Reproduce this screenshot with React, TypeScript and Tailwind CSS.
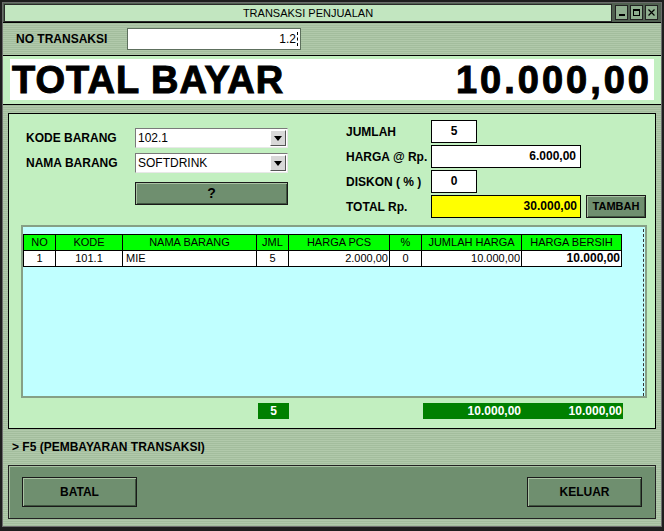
import React from "react";

const font = { fontFamily: '"Liberation Sans", Arial, sans-serif' };

const rows = [
  { no: "1", kode: "101.1", nama: "MIE", jml: "5", harga: "2.000,00", disk: "0", jumlah: "10.000,00", bersih: "10.000,00" },
];

const heads = ["NO", "KODE", "NAMA BARANG", "JML", "HARGA PCS", "%", "JUMLAH HARGA", "HARGA BERSIH"];

const Combo = ({ value }: { value: string }) => (
  <div className="flex h-[20px] w-[153px] border border-t-[#7a7a7a] border-l-[#7a7a7a] border-b-[#e8e8e8] border-r-[#e8e8e8] bg-white">
    <div className="flex-1 pl-[2px] text-[12px] leading-[18px] text-black">{value}</div>
    <div className="m-[1px] flex w-[16px] items-center justify-center border border-t-white border-l-white border-b-[#555] border-r-[#555] bg-[#d8d8d8]">
      <svg width="8" height="5" viewBox="0 0 8 5">
        <path d="M0 0h8L4 5z" fill="#000" />
      </svg>
    </div>
  </div>
);

const GreenButton = ({ children, className }: { children: React.ReactNode; className: string }) => (
  <div className={`flex items-center justify-center border border-[#1a1a1a] bg-[#6f8f6f] font-bold text-black shadow-[inset_1px_1px_0_#a9c2a3,inset_-1px_-1px_0_#3f553f] ${className}`}>
    {children}
  </div>
);

const Field = ({ value, className }: { value: string; className: string }) => (
  <div className={`h-[23px] border border-black text-[12px] font-bold leading-[21px] text-black ${className}`}>{value}</div>
);

const TitleBtn = ({ children }: { children: React.ReactNode }) => (
  <div className="flex h-[15px] w-[13px] items-center justify-center border border-[#222] bg-[#8fae8f]">{children}</div>
);

const stripes =
  "bg-[repeating-linear-gradient(0deg,#a3bd9d_0px,#a3bd9d_1px,#b1c9ab_1px,#b1c9ab_2px)]";

export default function App() {
  return (
    <div style={font} className="h-[531px] w-[664px] overflow-hidden bg-[#1e1e1e] p-[2px]">
      <div className={`flex h-[525px] flex-col border border-[#6c6c6c] ${stripes}`}>
        {/* title bar */}
        <div className="flex h-[19px] items-stretch bg-[#506050]">
          <div className="ml-[1px] mt-[1px] flex flex-1 items-center justify-center border border-[#2a2a2a] bg-[#c2e6c0] text-[11px] text-black">
            TRANSAKSI PENJUALAN
          </div>
          <div className="flex items-center gap-[2px] px-[3px]">
            <TitleBtn>
              <div className="mt-[5px] h-[2px] w-[6px] bg-black" />
            </TitleBtn>
            <TitleBtn>
              <div className="h-[7px] w-[7px] border border-black border-t-2" />
            </TitleBtn>
            <TitleBtn>
              <svg width="7" height="7" viewBox="0 0 7 7">
                <path d="M0.5 0.5l6 6M6.5 0.5l-6 6" stroke="#000" strokeWidth="1.2" />
              </svg>
            </TitleBtn>
          </div>
        </div>
        <div className="h-px bg-black" />

        {/* no transaksi */}
        <div className="flex h-[32px] items-center">
          <div className="ml-[13px] w-[111px] text-[12px] font-bold text-black">NO TRANSAKSI</div>
          <div className="flex h-[22px] w-[174px] items-center justify-end border border-[#5d6f5d] bg-white pr-[2px] text-[12px] text-black">
            1.2<span className="ml-px h-[14px] border-l border-dashed border-black" />
          </div>
        </div>
        <div className="h-px bg-black" />

        {/* total bayar */}
        <div className="h-[48px] bg-[#c2efc0] px-[7px] pt-[3px]">
          <div className="flex h-[41px] items-center justify-between bg-white pl-[2px] pr-[2px] text-[38px] font-bold leading-none text-black [-webkit-text-stroke:1px_black]">
            <span className="tracking-[1px]">TOTAL BAYAR</span>
            <span className="tracking-[3px]">10.000,00</span>
          </div>
        </div>
        <div className="h-px bg-black" />

        {/* main panel */}
        <div className="ml-[5px] mt-[8px] h-[316px] w-[648px] border border-black bg-[#c2efc0] pt-[6px]">
          <div className="flex h-[105px]">
            <div className="ml-[17px] mt-[8px] flex w-[303px] flex-col">
              <div className="flex items-center">
                <div className="w-[109px] text-[12px] font-bold text-black">KODE BARANG</div>
                <Combo value="102.1" />
              </div>
              <div className="mt-[5px] flex items-center">
                <div className="w-[109px] text-[12px] font-bold text-black">NAMA BARANG</div>
                <Combo value="SOFTDRINK" />
              </div>
              <GreenButton className="ml-[109px] mt-[9px] h-[23px] w-[153px] text-[14px]">?</GreenButton>
            </div>
            <div className="ml-[17px] flex flex-col gap-[2px]">
              <div className="flex items-center">
                <div className="w-[85px] text-[12px] font-bold text-black">JUMLAH</div>
                <Field value="5" className="w-[46px] bg-white text-center" />
              </div>
              <div className="flex items-center">
                <div className="w-[85px] text-[12px] font-bold text-black">HARGA @ Rp.</div>
                <Field value="6.000,00" className="w-[150px] bg-white pr-[4px] text-right" />
              </div>
              <div className="flex items-center">
                <div className="w-[85px] text-[12px] font-bold text-black">DISKON ( % )</div>
                <Field value="0" className="w-[46px] bg-white text-center" />
              </div>
              <div className="flex items-center">
                <div className="w-[85px] text-[12px] font-bold text-black">TOTAL Rp.</div>
                <Field value="30.000,00" className="w-[150px] bg-[#ffff00] pr-[3px] text-right" />
                <GreenButton className="ml-[5px] h-[23px] w-[60px] text-[11px]">TAMBAH</GreenButton>
              </div>
            </div>
          </div>

          {/* table */}
          <div className="ml-[12px] flex h-[173px] w-[626px] border-2 border-[#86a086] bg-[#c0ffff] pt-[2px]">
            <div className="flex-1">
              <div className="inline-grid grid-cols-[31px_66px_133px_31px_100px_31px_99px_99px] gap-px border border-black bg-black text-[11px] leading-[15px] text-black">
                {heads.map((h) => (
                  <div key={h} className="bg-[#00ff00] text-center">{h}</div>
                ))}
                {rows.map((r) => (
                  <React.Fragment key={r.no}>
                    <div className="bg-white text-center">{r.no}</div>
                    <div className="bg-white text-center">{r.kode}</div>
                    <div className="bg-white pl-[3px]">{r.nama}</div>
                    <div className="bg-white text-center">{r.jml}</div>
                    <div className="bg-white pr-px text-right">{r.harga}</div>
                    <div className="bg-white text-center">{r.disk}</div>
                    <div className="bg-white pr-px text-right">{r.jumlah}</div>
                    <div className="bg-white pr-px text-right text-[12px] font-bold">{r.bersih}</div>
                  </React.Fragment>
                ))}
              </div>
            </div>
            <div className="mr-px w-0 border-r border-dashed border-[#333]" />
          </div>

          {/* totals */}
          <div className="mt-[5px] flex h-[16px] text-[12px] font-bold leading-[16px] text-white">
            <div className="ml-[249px] w-[31px] bg-[#008000] text-center">5</div>
            <div className="ml-[134px] flex w-[200px] bg-[#008000]">
              <div className="w-[98px] text-right">10.000,00</div>
              <div className="flex-1 pr-px text-right">10.000,00</div>
            </div>
          </div>
        </div>

        {/* f5 hint */}
        <div className="flex h-[36px] items-center pl-[9px] text-[12px] font-bold text-black">
          &gt; F5 (PEMBAYARAN TRANSAKSI)
        </div>

        {/* footer */}
        <div className="ml-[5px] flex h-[54px] w-[648px] items-center justify-between border border-[#222] bg-[#6f8f6f] px-[13px] shadow-[inset_1px_1px_0_#a9c2a3]">
          <GreenButton className="h-[30px] w-[115px] text-[12px]">BATAL</GreenButton>
          <GreenButton className="h-[30px] w-[115px] text-[12px]">KELUAR</GreenButton>
        </div>
      </div>
    </div>
  );
}
